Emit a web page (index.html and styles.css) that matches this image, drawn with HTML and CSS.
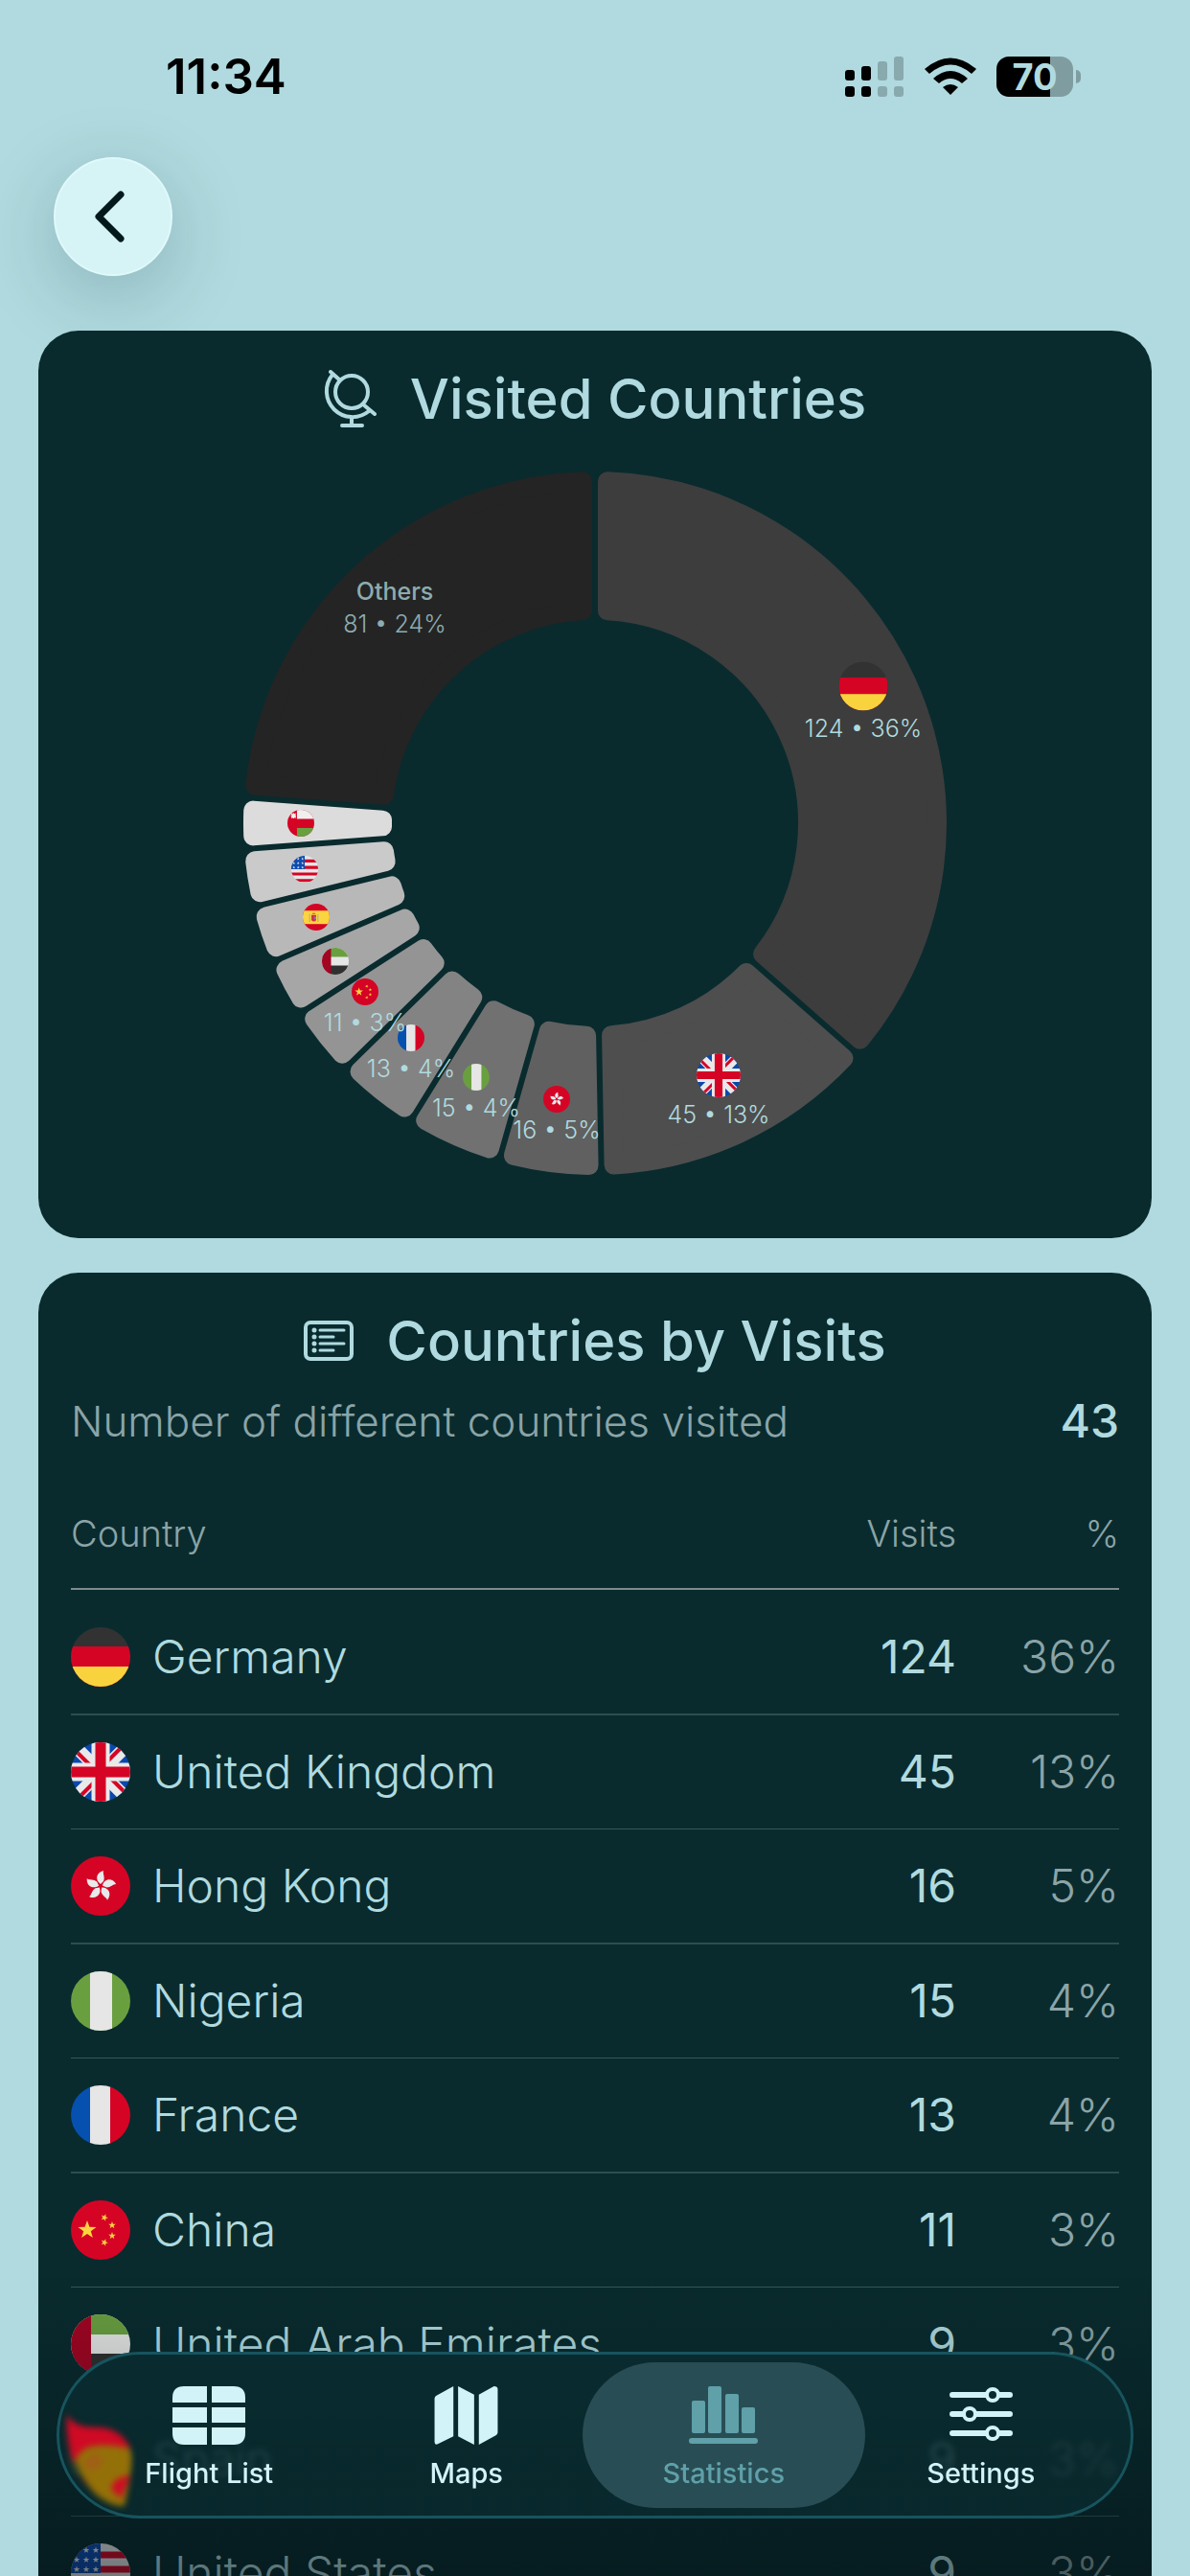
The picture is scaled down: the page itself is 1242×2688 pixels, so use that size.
FILE: index.html
```html
<!DOCTYPE html>
<html lang="en">
<head>
    <meta charset="UTF-8">
    <meta name="viewport" content="width=device-width, initial-scale=1.0">
    <title>Visited Countries</title>
    <link rel="stylesheet" href="styles.css">
</head>
<body>
    <!-- Round flags, shared by the chart and the table -->
    <svg class="sprites" aria-hidden="true">
        <defs>
            <clipPath id="round"><circle cx="31" cy="31" r="31"/></clipPath>
            <path id="star" d="M0 -10 L2.4 -3.2 L9.5 -3.1 L3.8 1.2 L5.9 8.1 L0 4 L-5.9 8.1 L-3.8 1.2 L-9.5 -3.1 L-2.4 -3.2 Z"/>
        </defs>
        <symbol id="de" viewBox="0 0 62 62">
            <g clip-path="url(#round)">
                <rect width="62" height="62" fill="#323232"/>
                <rect y="20" width="62" height="42" fill="#d50425"/>
                <rect y="41" width="62" height="21" fill="#f9d33e"/>
            </g>
        </symbol>
        <symbol id="gb" viewBox="0 0 62 62">
            <g clip-path="url(#round)">
                <rect width="62" height="62" fill="#0a48ac"/>
                <path d="M0 0 L62 62 M62 0 L0 62" stroke="#e9e9ea" stroke-width="13"/>
                <path d="M4 8 L31 35 M54 4 L31 27 M8 58 L31 35 M58 54 L31 27" stroke="#d50425" stroke-width="4"/>
                <path d="M31 0 V62 M0 31 H62" stroke="#e9e9ea" stroke-width="19"/>
                <path d="M31 0 V62 M0 31 H62" stroke="#d50425" stroke-width="11"/>
            </g>
        </symbol>
        <symbol id="hk" viewBox="0 0 62 62">
            <circle cx="31" cy="31" r="31" fill="#d50425"/>
            <g fill="#e9e9ea">
                <path id="petal" d="M31 29 C25 25 26 17 34 15 C33 18 36 22 34 26 Z"/>
                <use href="#petal" transform="rotate(72 31 31)"/>
                <use href="#petal" transform="rotate(144 31 31)"/>
                <use href="#petal" transform="rotate(216 31 31)"/>
                <use href="#petal" transform="rotate(288 31 31)"/>
            </g>
        </symbol>
        <symbol id="ng" viewBox="0 0 62 62">
            <g clip-path="url(#round)">
                <rect width="62" height="62" fill="#6a9f40"/>
                <rect x="20" width="23" height="62" fill="#e6e6e6"/>
            </g>
        </symbol>
        <symbol id="fr" viewBox="0 0 62 62">
            <g clip-path="url(#round)">
                <rect width="21" height="62" fill="#0650af"/>
                <rect x="20" width="22" height="62" fill="#e6e6e6"/>
                <rect x="41" width="21" height="62" fill="#d50425"/>
            </g>
        </symbol>
        <symbol id="cn" viewBox="0 0 62 62">
            <circle cx="31" cy="31" r="31" fill="#d50425"/>
            <g fill="#fbd440">
                <use href="#star" transform="translate(17 31)"/>
                <use href="#star" transform="translate(35 18) rotate(20) scale(.4)"/>
                <use href="#star" transform="translate(43 26) scale(.4)"/>
                <use href="#star" transform="translate(43 37) scale(.4)"/>
                <use href="#star" transform="translate(35 44) rotate(20) scale(.4)"/>
            </g>
        </symbol>
        <symbol id="ae" viewBox="0 0 62 62">
            <g clip-path="url(#round)">
                <rect width="62" height="62" fill="#e6e6e6"/>
                <rect width="62" height="21" fill="#6a9f40"/>
                <rect y="41" width="62" height="21" fill="#303030"/>
                <rect width="21" height="62" fill="#a20422"/>
            </g>
        </symbol>
        <symbol id="es" viewBox="0 0 62 62">
            <g clip-path="url(#round)">
                <rect width="62" height="62" fill="#d50425"/>
                <rect y="16" width="62" height="31" fill="#fbd440"/>
                <path d="M16 24 V42 M35 24 V42" stroke="#c9b27a" stroke-width="3"/>
                <path d="M20 26 H31 V36 Q31 41 25 41 Q20 41 20 36 Z" fill="#d5303c"/>
                <path d="M26 30 H31 V36 H26 Z" fill="#7a7fc0"/>
                <path d="M21 24 Q25 18 30 24 Z" fill="#c4564a"/>
            </g>
        </symbol>
        <symbol id="us" viewBox="0 0 62 62">
            <g clip-path="url(#round)">
                <rect width="62" height="62" fill="#e6e6e6"/>
                <path d="M0 12 H62 M0 27 H62 M0 42 H62 M0 57 H62" stroke="#d50425" stroke-width="7"/>
                <rect width="31" height="31" fill="#0d4bb0"/>
                <g fill="#e6e6e6">
                    <use href="#star" transform="translate(16 7) scale(.35)"/>
                    <use href="#star" transform="translate(26 7) scale(.35)"/>
                    <use href="#star" transform="translate(6 17) scale(.35)"/>
                    <use href="#star" transform="translate(16 17) scale(.35)"/>
                    <use href="#star" transform="translate(26 17) scale(.35)"/>
                    <use href="#star" transform="translate(6 27) scale(.35)"/>
                    <use href="#star" transform="translate(16 27) scale(.35)"/>
                    <use href="#star" transform="translate(26 27) scale(.35)"/>
                </g>
            </g>
        </symbol>
        <symbol id="om" viewBox="0 0 62 62">
            <g clip-path="url(#round)">
                <rect width="62" height="62" fill="#d50425"/>
                <rect x="22" width="40" height="21" fill="#efefef"/>
                <rect x="22" y="42" width="40" height="20" fill="#6a9f40"/>
                <path d="M9 9 L19 19 M19 9 L9 19 M14 8 V20 M8 14 H20" stroke="#efefef" stroke-width="3"/>
            </g>
        </symbol>
    </svg>

    <div class="screen">
        <!-- Status bar -->
        <div class="status-bar">
            <span class="time">11:34</span>
            <div class="status-icons">
                <svg class="signal" viewBox="0 0 62 42">
                    <rect x="0" y="14" width="10" height="11" rx="3"/>
                    <rect x="17" y="10" width="10" height="15" rx="3"/>
                    <rect x="0" y="31" width="10" height="11" rx="3"/>
                    <rect x="17" y="31" width="10" height="11" rx="3"/>
                    <g opacity=".22">
                        <rect x="34" y="5" width="10" height="20" rx="3"/>
                        <rect x="51" y="0" width="10" height="25" rx="3"/>
                        <rect x="34" y="31" width="10" height="11" rx="3"/>
                        <rect x="51" y="31" width="10" height="11" rx="3"/>
                    </g>
                </svg>
                <svg class="wifi" viewBox="0 0 54 40">
                    <path d="M0 12 Q27 -11 54 12 L49 17 Q27 -2 5 17 Z"/>
                    <path d="M9 22 Q27 6 45 22 L39 27 Q27 17 15 27 Z"/>
                    <path d="M19 31 Q27 25 35 31 L27 39 Z"/>
                </svg>
                <div class="battery"><span>70</span></div>
            </div>
        </div>

        <button class="back" aria-label="Back">
            <svg viewBox="0 0 32 54"><path d="M28 4 L5 27 L28 50"/></svg>
        </button>

        <main>
            <!-- Donut chart -->
            <section class="card chart-card">
                <h2>
                    <svg class="globe" viewBox="0 0 56 60">
                        <circle cx="29" cy="23" r="17"/>
                        <path d="M7 2 L16 10 M41 36 L53 46"/>
                        <path d="M9 5 A27 27 0 0 0 47 43"/>
                        <path d="M29 50 V57 M19 58 H40"/>
                    </svg>
                    Visited Countries
                </h2>
                <svg class="donut" id="donut" viewBox="0 0 736 736"></svg>
            </section>

            <!-- Visits table -->
            <section class="card">
                <h2>
                    <svg class="list" viewBox="0 0 52 42">
                        <rect x="2" y="2" width="48" height="38" rx="5"/>
                        <path d="M17 10 H42 M17 17 H31 M17 24 H42 M17 31 H31" stroke-width="3"/>
                        <path d="M11 10 H11 M11 17 H11 M11 24 H11 M11 31 H11" stroke-width="5"/>
                    </svg>
                    Countries by Visits
                </h2>
                <div class="total">
                    <span>Number of different countries visited</span>
                    <strong>43</strong>
                </div>
                <table>
                    <thead>
                        <tr><th>Country</th><th>Visits</th><th>%</th></tr>
                    </thead>
                    <tbody>
                        <tr>
                            <td><div class="country"><svg class="flag"><use href="#de"/></svg>Germany</div></td>
                            <td>124</td><td>36%</td>
                        </tr>
                        <tr>
                            <td><div class="country"><svg class="flag"><use href="#gb"/></svg>United Kingdom</div></td>
                            <td>45</td><td>13%</td>
                        </tr>
                        <tr>
                            <td><div class="country"><svg class="flag"><use href="#hk"/></svg>Hong Kong</div></td>
                            <td>16</td><td>5%</td>
                        </tr>
                        <tr>
                            <td><div class="country"><svg class="flag"><use href="#ng"/></svg>Nigeria</div></td>
                            <td>15</td><td>4%</td>
                        </tr>
                        <tr>
                            <td><div class="country"><svg class="flag"><use href="#fr"/></svg>France</div></td>
                            <td>13</td><td>4%</td>
                        </tr>
                        <tr>
                            <td><div class="country"><svg class="flag"><use href="#cn"/></svg>China</div></td>
                            <td>11</td><td>3%</td>
                        </tr>
                        <tr>
                            <td><div class="country"><svg class="flag"><use href="#ae"/></svg>United Arab Emirates</div></td>
                            <td>9</td><td>3%</td>
                        </tr>
                        <tr>
                            <td><div class="country"><svg class="flag"><use href="#es"/></svg>Spain</div></td>
                            <td>9</td><td>3%</td>
                        </tr>
                        <tr>
                            <td><div class="country"><svg class="flag"><use href="#us"/></svg>United States</div></td>
                            <td>9</td><td>3%</td>
                        </tr>
                    </tbody>
                </table>
            </section>
        </main>

        <div class="fade"></div>

        <!-- Tab bar -->
        <nav class="tab-bar">
            <svg class="glow" viewBox="0 0 90 110" aria-hidden="true">
                <path d="M10 12 Q16 26 40 24 Q70 24 77 50 Q78 70 70 104 Q58 106 40 92 Q14 66 10 12 Z" fill="#947008"/>
                <path d="M10 8 Q16 22 40 22 Q66 22 76 44 Q50 38 34 42 Q22 46 17 60 Q8 34 10 8 Z" fill="#cf0a24"/>
                <path d="M76 72 Q58 74 56 86 Q60 90 66 96 Z" fill="#cf0a24"/>
                <path d="M28 62 L42 50 M34 66 L46 56" stroke="#a85420" stroke-width="4"/>
            </svg>
            <button class="tab">
                <svg class="icon-table" viewBox="0 0 76 61">
                    <path d="M36 0 H12 Q0 0 0 12 V17 H36 Z M41 0 H64 Q76 0 76 12 V17 H41 Z"/>
                    <path d="M0 22 H36 V38 H0 Z M41 22 H76 V38 H41 Z"/>
                    <path d="M36 61 H12 Q0 61 0 49 V43 H36 Z M41 61 H64 Q76 61 76 49 V43 H41 Z"/>
                </svg>
                Flight List
            </button>
            <button class="tab">
                <svg class="icon-map" viewBox="0 0 67 62">
                    <path d="M20 0 L2 10 Q0 11 0 13 V59 Q0 63 4 61 L20 53 Z"/>
                    <path d="M25 0 L42 9 V62 L25 53 Z"/>
                    <path d="M47 9 L63 0 Q67 0 67 3 V49 Q67 51 65 52 L47 62 Z"/>
                </svg>
                Maps
            </button>
            <button class="tab active">
                <svg class="icon-bars" viewBox="0 0 72 61">
                    <rect x="3" y="15" width="14" height="34" rx="2"/>
                    <rect x="20" y="0" width="14" height="49" rx="2"/>
                    <rect x="38" y="8" width="14" height="41" rx="2"/>
                    <rect x="55" y="22" width="14" height="27" rx="2"/>
                    <rect x="0" y="54" width="72" height="6" rx="3"/>
                </svg>
                Statistics
            </button>
            <button class="tab">
                <svg class="icon-sliders" viewBox="0 0 66 61">
                    <path d="M3 9 H63 M3 29 H63 M3 49 H63" stroke-width="6"/>
                    <circle cx="45" cy="9" r="6" stroke-width="4"/>
                    <circle cx="21" cy="29" r="6" stroke-width="4"/>
                    <circle cx="45" cy="49" r="6" stroke-width="4"/>
                </svg>
                Settings
            </button>
        </nav>
    </div>

    <script>
        const slices = [
            { flag: 'de', visits: 124, color: '#3d3d3d', size: 51, label: true },
            { flag: 'gb', visits: 45, color: '#4e4e4e', size: 46, label: true },
            { flag: 'hk', visits: 16, color: '#606060', size: 28, label: true },
            { flag: 'ng', visits: 15, color: '#717171', size: 28, label: true },
            { flag: 'fr', visits: 13, color: '#838383', size: 28, label: true },
            { flag: 'cn', visits: 11, color: '#949494', size: 28, label: true },
            { flag: 'ae', visits: 9, color: '#a6a6a6', size: 28 },
            { flag: 'es', visits: 9, color: '#b8b8b8', size: 28 },
            { flag: 'us', visits: 9, color: '#cacaca', size: 28 },
            { flag: 'om', visits: 8, color: '#dcdcdc', size: 28 },
            { name: 'Others', visits: 81, color: '#242424', label: true }
        ];
        const total = slices.reduce((sum, s) => sum + s.visits, 0);
        const center = 368;
        const outer = 367;
        const inner = 212;
        const corner = 10; // rounded by a stroke of twice this width
        const inset = corner + 3;

        function point(radius, angle) {
            return (center + radius * Math.sin(angle)).toFixed(2) + ' ' + (center - radius * Math.cos(angle)).toFixed(2);
        }

        function slicePath(start, end) {
            const ro = outer - corner;
            const ri = inner + corner;
            const ao = Math.asin(inset / ro);
            const ai = Math.asin(inset / ri);
            return `M${point(ro, start + ao)} A${ro} ${ro} 0 0 1 ${point(ro, end - ao)}` +
                ` L${point(ri, end - ai)} A${ri} ${ri} 0 0 0 ${point(ri, start + ai)} Z`;
        }

        let shapes = '';
        let labels = '';
        let angle = 0;
        slices.forEach(s => {
            const end = angle + s.visits / total * 2 * Math.PI;
            const mid = (angle + end) / 2;
            const x = Math.round(center + 307 * Math.sin(mid));
            const y = Math.round(center - 307 * Math.cos(mid));
            shapes += `<path d="${slicePath(angle, end)}" fill="${s.color}" stroke="${s.color}" stroke-width="${corner * 2}" stroke-linejoin="round"/>`;

            const text = `${s.visits} • ${Math.round(s.visits / total * 100)}%`;
            if (s.name) {
                labels += `<g class="others"><text class="name" x="${x}" y="${y - 8}">${s.name}</text><text x="${x}" y="${y + 26}">${text}</text></g>`;
            } else {
                const top = s.label ? y - 16 : y;
                labels += `<use href="#${s.flag}" x="${x - s.size / 2}" y="${top - s.size / 2}" width="${s.size}" height="${s.size}"/>`;
                if (s.label) {
                    labels += `<text x="${x}" y="${y + s.size / 2 + 11}">${text}</text>`;
                }
            }
            angle = end;
        });
        document.getElementById('donut').innerHTML = shapes + labels;
    </script>
</body>
</html>
```

FILE: styles.css
```css
* {
    box-sizing: border-box;
}
body {
    margin: 0;
    background: #b0dadf;
    color: #b0dadf;
    font-family: Inter, "Liberation Sans", sans-serif;
}
button {
    border: 0;
    padding: 0;
    font-family: inherit;
}
.sprites {
    position: absolute;
    width: 0;
    height: 0;
}
.screen {
    position: relative;
    height: 100vh;
    overflow: hidden;
}

/* Status bar */
.status-bar {
    display: flex;
    justify-content: space-between;
    align-items: center;
    padding: 48px 114px 52px 173px;
    color: #000;
}
.time {
    font-size: 51px;
    font-weight: 600;
    line-height: 64px;
}
.status-icons {
    display: flex;
    align-items: center;
    gap: 21px;
}
.signal {
    width: 62px;
    height: 42px;
}
.wifi {
    width: 54px;
    height: 40px;
}
.battery {
    position: relative;
    width: 80px;
    height: 42px;
    margin-right: 8px;
    border-radius: 13px;
    background: linear-gradient(90deg, #000 70%, #7f9da1 70%);
    color: #b0dadf;
    font-size: 38px;
    font-weight: 700;
    line-height: 42px;
    text-align: center;
}
.battery::after {
    content: "";
    position: absolute;
    left: 83px;
    top: 14px;
    width: 5px;
    height: 14px;
    border-radius: 0 7px 7px 0;
    background: #7f9da1;
}
.back {
    display: flex;
    align-items: center;
    justify-content: center;
    width: 124px;
    height: 124px;
    margin: 0 0 57px 56px;
    padding-right: 8px;
    border: 2px solid #e0f9fb;
    border-radius: 50%;
    background: #d6f3f6;
    box-shadow: 0 20px 80px rgba(0, 40, 50, 0.22);
}
.back svg {
    width: 32px;
    height: 54px;
    fill: none;
    stroke: #04191c;
    stroke-width: 7px;
    stroke-linecap: round;
    stroke-linejoin: round;
}

/* Cards */
main {
    position: relative;
    padding: 0 40px;
}
.card {
    margin-bottom: 36px;
    padding: 35px 34px 0;
    border-radius: 42px;
    background: #092b2e;
}
.chart-card {
    padding-bottom: 65px;
}
h2 {
    display: flex;
    align-items: center;
    justify-content: center;
    gap: 34px;
    margin: 0;
    font-size: 58px;
    font-weight: 500;
    line-height: 72px;
}
h2 svg {
    fill: none;
    stroke: #b0dadf;
    stroke-width: 4px;
    stroke-linecap: round;
}
.globe {
    width: 56px;
    height: 60px;
}
.list {
    width: 52px;
    height: 42px;
}
.donut {
    display: block;
    width: 100%;
    max-width: 736px;
    margin: 39px auto 0;
}
.donut text {
    fill: #b0dadf;
    font-size: 25px;
    font-weight: 300;
    text-anchor: middle;
}
.donut .others {
    opacity: 0.75;
}
.donut .name {
    font-weight: 500;
}

/* Table */
.total {
    display: flex;
    justify-content: space-between;
    margin-top: 18px;
    font-size: 44px;
    font-weight: 300;
    line-height: 60px;
}
.total span {
    color: #8ba4a7;
}
.total strong {
    font-size: 48px;
    font-weight: 500;
}
table {
    width: 100%;
    border-collapse: separate;
    border-spacing: 0;
}
th {
    padding: 63px 0 33px;
    border-bottom: 2px solid #7f8b8c;
    color: #8ba4a7;
    font-size: 38px;
    font-weight: 300;
    line-height: 48px;
    text-align: right;
}
th:first-child {
    text-align: left;
}
th:last-child {
    width: 170px;
}
td {
    padding: 28px 0;
    border-bottom: 1px solid #35575a;
    font-size: 48px;
    font-weight: 400;
    line-height: 62px;
    text-align: right;
}
tr:nth-child(odd) td {
    border-bottom: 2px solid #2c4e51;
}
tbody tr:first-child td {
    padding-top: 39px;
}
td:last-child {
    color: #8ba4a7;
    font-weight: 300;
}
.country {
    display: flex;
    align-items: center;
    gap: 23px;
    font-weight: 300;
}
.flag {
    width: 62px;
    height: 62px;
}

/* Darkens the end of the list behind the tab bar */
.fade {
    position: absolute;
    left: 40px;
    right: 40px;
    bottom: 0;
    height: 320px;
    background: linear-gradient(rgba(3, 14, 18, 0), rgba(3, 14, 18, 0.5));
}

/* Tab bar */
.tab-bar {
    position: absolute;
    left: 59px;
    right: 59px;
    bottom: 60px;
    display: flex;
    padding: 8px 22px;
    border: 3px solid #17545e;
    border-radius: 87px;
    background: linear-gradient(#092b2f 30%, rgba(9, 43, 47, 0.8) 55%);
    backdrop-filter: blur(3px);
}
.glow {
    position: absolute;
    left: -2px;
    top: 54px;
    width: 90px;
    height: 110px;
    filter: blur(3px);
}
.tab {
    position: relative;
    display: flex;
    flex: 1;
    flex-direction: column;
    align-items: center;
    justify-content: space-between;
    height: 152px;
    margin: 0 -13px;
    padding: 25px 0 16px;
    border-radius: 76px;
    background: none;
    color: #d2f3f8;
    font-size: 29px;
    font-weight: 500;
    line-height: 40px;
}
.tab.active {
    background: #294d54;
    color: #5fa0a9;
}
.tab svg {
    height: 61px;
    fill: currentColor;
}
.icon-table {
    width: 76px;
}
.icon-map {
    width: 67px;
}
.icon-bars {
    width: 72px;
}
.icon-sliders {
    width: 66px;
    stroke: currentColor;
    stroke-linecap: round;
}
.tab .icon-sliders circle {
    fill: #092b2f;
}
```
